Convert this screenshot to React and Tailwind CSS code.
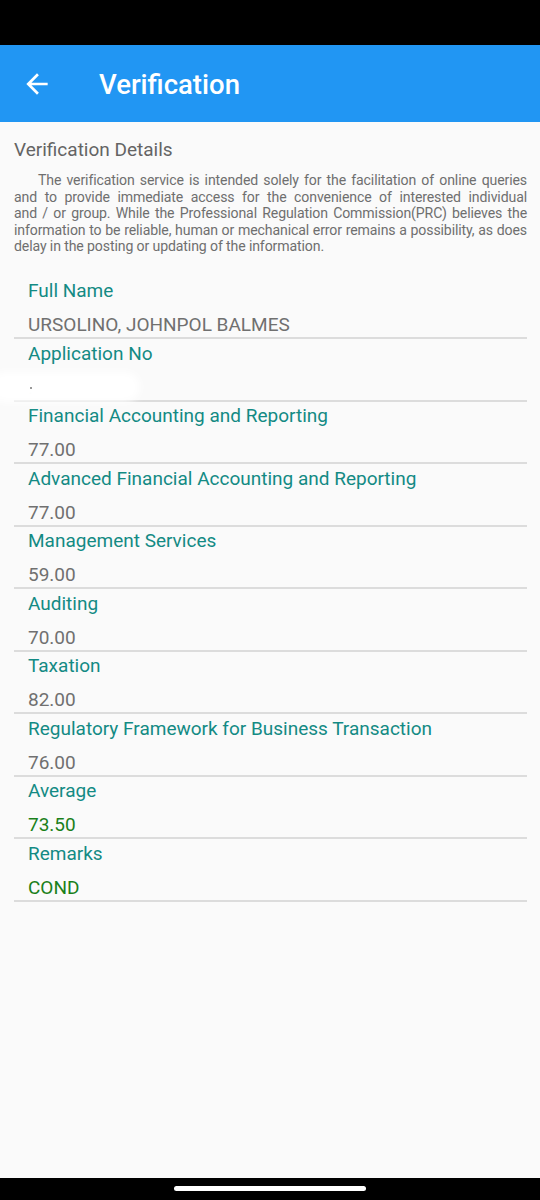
import React from "react";

const rows = [
  { label: "Full Name", value: "URSOLINO, JOHNPOL BALMES" },
  { label: "Application No", value: "." , small: true },
  { label: "Financial Accounting and Reporting", value: "77.00" },
  { label: "Advanced Financial Accounting and Reporting", value: "77.00" },
  { label: "Management Services", value: "59.00" },
  { label: "Auditing", value: "70.00" },
  { label: "Taxation", value: "82.00" },
  { label: "Regulatory Framework for Business Transaction", value: "76.00" },
  { label: "Average", value: "73.50", green: true },
  { label: "Remarks", value: "COND", green: true },
];

const lines = [
  "The verification service is intended solely for the facilitation of online queries",
  "and to provide immediate access for the convenience of interested individual",
  "and / or group. While the Professional Regulation Commission(PRC) believes the",
  "information to be reliable, human or mechanical error remains a possibility, as does",
];

export default function App() {
  return (
    <div
      className="w-[540px] h-[1200px] flex flex-col bg-[#fafafa] overflow-hidden"
      style={{ fontFamily: "Roboto, 'Noto Sans', sans-serif" }}
    >
      <div className="h-[45px] bg-black shrink-0" />
      <div className="h-[77px] bg-[#2196f3] shrink-0 flex items-center">
        <svg
          width="32"
          height="32"
          viewBox="0 0 24 24"
          className="ml-[21px] mt-[1px]"
          fill="white"
        >
          <path d="M20 11H7.83l5.59-5.59L12 4l-8 8 8 8 1.41-1.41L7.83 13H20v-2z" />
        </svg>
        <span className="ml-[46px] mt-[2px] text-white text-[27.5px] font-medium leading-none">
          Verification
        </span>
      </div>
      <div className="flex-1 relative">
        <div className="pt-[16px] px-[14px] pr-[13px]">
          <div className="text-[19px] leading-[24px] text-[#646464]">
            Verification Details
          </div>
          <div className="mt-[10px] text-[14.1px] leading-[16.5px] text-[#6f6f6f] tracking-[-0.12px]">
            {lines.map((l, i) => (
              <div
                key={i}
                className={
                  "text-justify [text-align-last:justify] whitespace-nowrap " +
                  (i === 0 ? "pl-[24px]" : "")
                }
              >
                {l}
              </div>
            ))}
            <div className="whitespace-nowrap">delay in the posting or updating of the information.</div>
          </div>
          <div className="mt-[22px]">
            {rows.map((r) => (
              <div
                key={r.label}
                className="px-[14px] pt-[2.5px] border-b-2 border-[#dcdcdc]"
              >
                <div className="text-[19px] leading-[24px] text-[#138a84]">
                  {r.label}
                </div>
                <div
                  className={
                    "mt-[10px] text-[19px] leading-[24px] " +
                    (r.green ? "text-[#1a801a]" : "text-[#707070]")
                  }
                >
                  {r.value}
                </div>
              </div>
            ))}
          </div>
        </div>
        <div className="absolute left-[-10px] top-[250px] w-[150px] h-[30px] rounded-full bg-white blur-[4px]" />
        <div className="absolute left-[30px] top-[265px] w-[2px] h-[2px] rounded-full bg-[#777]" />
      </div>
      <div className="h-[22px] bg-black shrink-0 flex justify-center items-center">
        <div className="w-[192px] h-[5px] rounded-full bg-white -mt-[2px]" />
      </div>
    </div>
  );
}
